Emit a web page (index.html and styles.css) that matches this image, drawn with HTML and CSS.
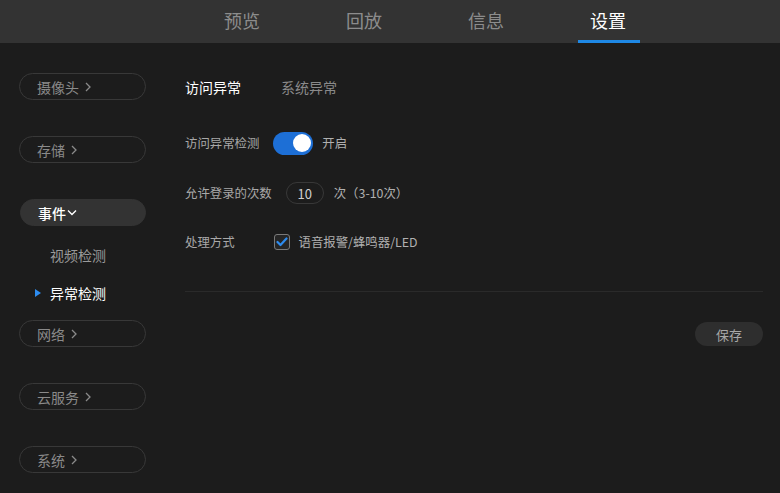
FILE: index.html
```html
<!DOCTYPE html>
<html lang="zh">
<head>
<meta charset="utf-8">
<link rel="stylesheet" href="styles.css">
</head>
<body>
<header class="topbar">
  <nav class="topnav">
    <a class="topnav-item">预览</a>
    <a class="topnav-item">回放</a>
    <a class="topnav-item">信息</a>
    <a class="topnav-item active">设置</a>
  </nav>
</header>
<div class="layout">
  <aside class="sidebar">
    <div class="side-btn">摄像头<svg class="chev" width="6" height="10" viewBox="0 0 6 10"><path d="M1 1 L5 5 L1 9" fill="none" stroke="#8a8a8a" stroke-width="1.3"/></svg></div>
    <div class="side-btn">存储<svg class="chev" width="6" height="10" viewBox="0 0 6 10"><path d="M1 1 L5 5 L1 9" fill="none" stroke="#8a8a8a" stroke-width="1.3"/></svg></div>
    <div class="side-btn open">事件<svg class="down" width="10" height="7" viewBox="0 0 10 7"><path d="M1 1.5 L5 5.5 L9 1.5" fill="none" stroke="#fff" stroke-width="1.4"/></svg></div>
    <div class="sub-list">
      <div class="sub-item">视频检测</div>
      <div class="sub-item active"><span class="tri"></span>异常检测</div>
    </div>
    <div class="side-btn">网络<svg class="chev" width="6" height="10" viewBox="0 0 6 10"><path d="M1 1 L5 5 L1 9" fill="none" stroke="#8a8a8a" stroke-width="1.3"/></svg></div>
    <div class="side-btn">云服务<svg class="chev" width="6" height="10" viewBox="0 0 6 10"><path d="M1 1 L5 5 L1 9" fill="none" stroke="#8a8a8a" stroke-width="1.3"/></svg></div>
    <div class="side-btn">系统<svg class="chev" width="6" height="10" viewBox="0 0 6 10"><path d="M1 1 L5 5 L1 9" fill="none" stroke="#8a8a8a" stroke-width="1.3"/></svg></div>
  </aside>
  <main class="content">
    <div class="tabs">
      <span class="tab active">访问异常</span>
      <span class="tab">系统异常</span>
    </div>
    <div class="form">
      <div class="row">
        <span class="label">访问异常检测</span>
        <span class="toggle"><span class="knob"></span></span>
        <span class="value">开启</span>
      </div>
      <div class="row row2">
        <span class="label">允许登录的次数</span>
        <span class="num-input">10</span>
        <span class="value">次（3-10次）</span>
      </div>
      <div class="row row3">
        <span class="label label-wide">处理方式</span>
        <span class="checkbox"><svg width="12" height="10" viewBox="0 0 12 10"><path d="M1.5 5 L4.5 8 L10.5 1.5" fill="none" stroke="#2d8cf0" stroke-width="2.2" stroke-linecap="round" stroke-linejoin="round"/></svg></span>
        <span class="value">语音报警/蜂鸣器/LED</span>
      </div>
    </div>
    <div class="divider"></div>
    <div class="actions">
      <button class="save">保存</button>
    </div>
  </main>
</div>
</body>
</html>
```
FILE: styles.css
```css
* { box-sizing: border-box; }
html, body {
  margin: 0;
  padding: 0;
  width: 780px;
  height: 493px;
  overflow: hidden;
  background: #1c1c1c;
  font-family: "Noto Sans CJK SC", "Noto Sans", sans-serif;
}
.topbar {
  height: 43px;
  background: #333333;
}
.topnav {
  display: flex;
  padding-left: 181px;
  height: 43px;
}
.topnav-item {
  width: 122px;
  display: flex;
  justify-content: center;
  align-items: center;
  font-size: 18px;
  color: #8c8c8c;
  position: relative;
  padding-bottom: 3px;
}
.topnav-item.active { color: #ffffff; }
.topnav-item.active::after {
  content: "";
  position: absolute;
  left: 31px;
  right: 29px;
  bottom: 0;
  height: 3px;
  background: #1e88e5;
}
.layout {
  display: flex;
}
.sidebar {
  width: 185px;
  padding-top: 30px;
  padding-left: 19px;
  display: flex;
  flex-direction: column;
}
.side-btn {
  width: 127px;
  height: 27px;
  border: 1px solid #383838;
  border-radius: 14px;
  padding-left: 17px;
  display: flex;
  align-items: center;
  font-size: 14px;
  color: #8a8a8a;
  margin-bottom: 36px;
}
.side-btn .chev {
  margin-left: 6px;
}
.side-btn.open {
  background: #333333;
  border-color: #333333;
  color: #ffffff;
  font-weight: 500;
  margin-bottom: 19px;
  margin-left: 1px;
  width: 126px;
  padding-left: 17px;
}
.side-btn.open .down { margin-left: 1px; }
.sub-list {
  display: flex;
  flex-direction: column;
  gap: 18px;
  margin-bottom: 17px;
}
.sub-item {
  height: 20px;
  line-height: 20px;
  font-size: 14px;
  color: #9a9a9a;
  padding-left: 31px;
  position: relative;
}
.sub-item.active { color: #ffffff; }
.tri {
  position: absolute;
  left: 16px;
  top: 6px;
  width: 0;
  height: 0;
  border-top: 4px solid transparent;
  border-bottom: 4px solid transparent;
  border-left: 6px solid #2d8cf0;
}
.content {
  flex: 1;
  padding-top: 34px;
  padding-right: 17px;
}
.tabs {
  display: flex;
  gap: 40px;
  height: 20px;
  line-height: 20px;
}
.tab {
  font-size: 14px;
  color: #8a8a8a;
}
.tab.active { color: #ffffff; }
.form {
  margin-top: 34px;
  display: flex;
  flex-direction: column;
}
.row {
  display: flex;
  align-items: center;
  height: 24px;
  font-size: 12.4px;
  color: #a8a8a8;
  white-space: nowrap;
}
.row2 { margin-top: 26px; }
.row3 { margin-top: 25px; }
.label { margin-right: 14px; }
.label-wide { margin-right: 39px; }
.value { color: #b0b0b0; }
.toggle {
  width: 40px;
  height: 23px;
  border-radius: 12px;
  background: #1d6fd6;
  display: flex;
  align-items: center;
  justify-content: flex-end;
  padding-right: 2px;
  margin-right: 9px;
}
.knob {
  width: 18px;
  height: 18px;
  border-radius: 50%;
  background: #ffffff;
}
.num-input {
  width: 38px;
  height: 22px;
  border: 1px solid #383838;
  border-radius: 11px;
  display: flex;
  align-items: center;
  justify-content: center;
  color: #d0d0d0;
  font-size: 13px;
  margin-right: 10px;
}
.checkbox {
  width: 16px;
  height: 16px;
  border: 1.5px solid #7a7a7a;
  border-radius: 3px;
  background: #262626;
  display: flex;
  align-items: center;
  justify-content: center;
  margin-right: 9px;
}
.divider {
  margin-top: 37px;
  height: 1px;
  background: #2a2a2a;
}
.actions {
  display: flex;
  justify-content: flex-end;
  margin-top: 30px;
}
.save {
  width: 68px;
  height: 24px;
  border: none;
  border-radius: 12px;
  background: #2e2e2e;
  color: #a8a8a8;
  font-family: inherit;
  font-size: 13px;
  padding: 0;
}
```
